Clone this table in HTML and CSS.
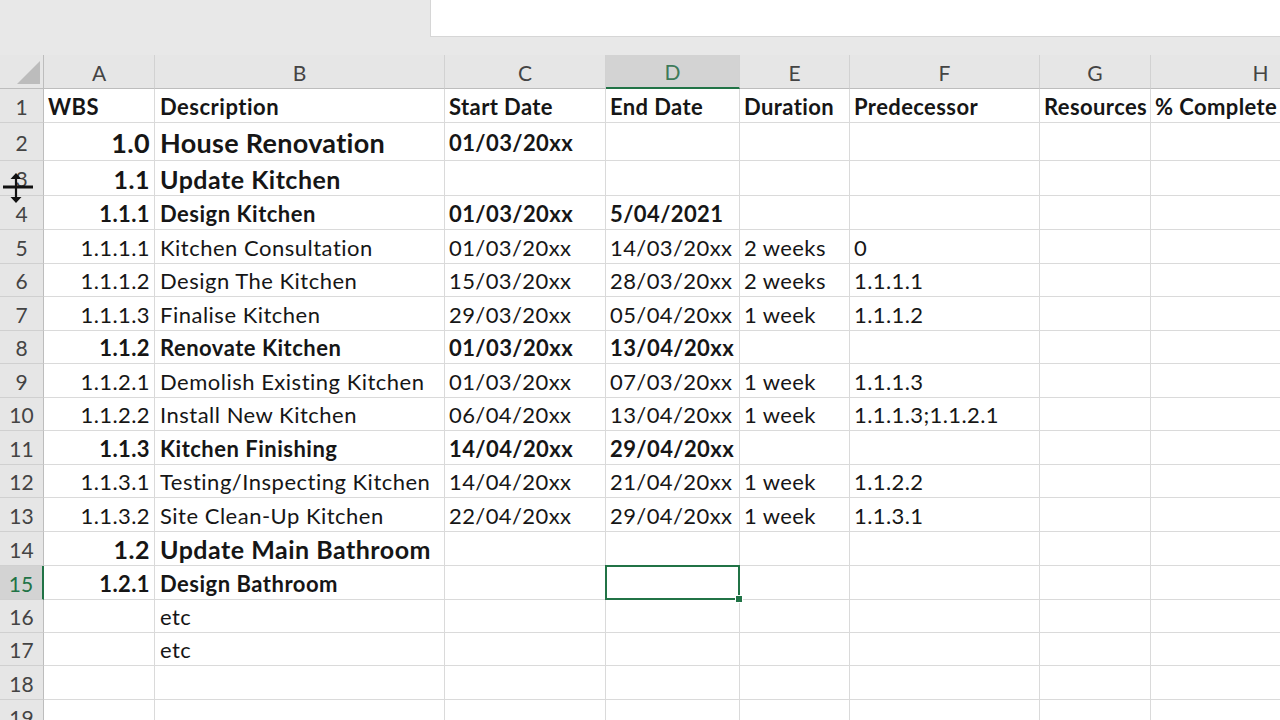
FILE: index.html
```html
<!DOCTYPE html>
<html>
<head>
<meta charset="utf-8">
<link rel="stylesheet" href="styles.css">
</head>
<body>
<div class="app">
  <div class="topbar"><div class="formula"></div></div>
  <div class="sheet">
    <div class="corner"><span class="tri"></span></div>
    <div class="ch">A</div><div class="ch">B</div><div class="ch">C</div><div class="ch sel">D</div><div class="ch">E</div><div class="ch">F</div><div class="ch">G</div><div class="ch">H</div>

    <div class="rh">1</div>
    <div class="c b">WBS</div><div class="c b desc">Description</div><div class="c b">Start Date</div><div class="c b">End Date</div><div class="c b">Duration</div><div class="c b">Predecessor</div><div class="c b">Resources</div><div class="c b">% Complete</div>

    <div class="rh">2</div>
    <div class="c r b xl">1.0</div><div class="c b xl desc">House Renovation</div><div class="c b">01/03/20xx</div><div class="c"></div><div class="c"></div><div class="c"></div><div class="c"></div><div class="c"></div>

    <div class="rh">3</div>
    <div class="c r b l">1.1</div><div class="c b l desc">Update Kitchen</div><div class="c"></div><div class="c"></div><div class="c"></div><div class="c"></div><div class="c"></div><div class="c"></div>

    <div class="rh">4</div>
    <div class="c r b">1.1.1</div><div class="c b desc">Design Kitchen</div><div class="c b">01/03/20xx</div><div class="c b">5/04/2021</div><div class="c"></div><div class="c"></div><div class="c"></div><div class="c"></div>

    <div class="rh">5</div>
    <div class="c r">1.1.1.1</div><div class="c desc">Kitchen Consultation</div><div class="c">01/03/20xx</div><div class="c">14/03/20xx</div><div class="c">2 weeks</div><div class="c">0</div><div class="c"></div><div class="c"></div>

    <div class="rh">6</div>
    <div class="c r">1.1.1.2</div><div class="c desc">Design The Kitchen</div><div class="c">15/03/20xx</div><div class="c">28/03/20xx</div><div class="c">2 weeks</div><div class="c">1.1.1.1</div><div class="c"></div><div class="c"></div>

    <div class="rh">7</div>
    <div class="c r">1.1.1.3</div><div class="c desc">Finalise Kitchen</div><div class="c">29/03/20xx</div><div class="c">05/04/20xx</div><div class="c">1 week</div><div class="c">1.1.1.2</div><div class="c"></div><div class="c"></div>

    <div class="rh">8</div>
    <div class="c r b">1.1.2</div><div class="c b desc">Renovate Kitchen</div><div class="c b">01/03/20xx</div><div class="c b">13/04/20xx</div><div class="c"></div><div class="c"></div><div class="c"></div><div class="c"></div>

    <div class="rh">9</div>
    <div class="c r">1.1.2.1</div><div class="c desc">Demolish Existing Kitchen</div><div class="c">01/03/20xx</div><div class="c">07/03/20xx</div><div class="c">1 week</div><div class="c">1.1.1.3</div><div class="c"></div><div class="c"></div>

    <div class="rh">10</div>
    <div class="c r">1.1.2.2</div><div class="c desc">Install New Kitchen</div><div class="c">06/04/20xx</div><div class="c">13/04/20xx</div><div class="c">1 week</div><div class="c">1.1.1.3;1.1.2.1</div><div class="c"></div><div class="c"></div>

    <div class="rh">11</div>
    <div class="c r b">1.1.3</div><div class="c b desc">Kitchen Finishing</div><div class="c b">14/04/20xx</div><div class="c b">29/04/20xx</div><div class="c"></div><div class="c"></div><div class="c"></div><div class="c"></div>

    <div class="rh">12</div>
    <div class="c r">1.1.3.1</div><div class="c desc">Testing/Inspecting Kitchen</div><div class="c">14/04/20xx</div><div class="c">21/04/20xx</div><div class="c">1 week</div><div class="c">1.1.2.2</div><div class="c"></div><div class="c"></div>

    <div class="rh">13</div>
    <div class="c r">1.1.3.2</div><div class="c desc">Site Clean-Up Kitchen</div><div class="c">22/04/20xx</div><div class="c">29/04/20xx</div><div class="c">1 week</div><div class="c">1.1.3.1</div><div class="c"></div><div class="c"></div>

    <div class="rh">14</div>
    <div class="c r b l">1.2</div><div class="c b l desc">Update Main Bathroom</div><div class="c"></div><div class="c"></div><div class="c"></div><div class="c"></div><div class="c"></div><div class="c"></div>

    <div class="rh sel">15</div>
    <div class="c r b">1.2.1</div><div class="c b desc">Design Bathroom</div><div class="c"></div><div class="c active"><span class="handle"></span></div><div class="c"></div><div class="c"></div><div class="c"></div><div class="c"></div>

    <div class="rh">16</div>
    <div class="c"></div><div class="c desc">etc</div><div class="c"></div><div class="c"></div><div class="c"></div><div class="c"></div><div class="c"></div><div class="c"></div>

    <div class="rh">17</div>
    <div class="c"></div><div class="c desc">etc</div><div class="c"></div><div class="c"></div><div class="c"></div><div class="c"></div><div class="c"></div><div class="c"></div>

    <div class="rh">18</div>
    <div class="c"></div><div class="c"></div><div class="c"></div><div class="c"></div><div class="c"></div><div class="c"></div><div class="c"></div><div class="c"></div>

    <div class="rh">19</div>
    <div class="c"></div><div class="c"></div><div class="c"></div><div class="c"></div><div class="c"></div><div class="c"></div><div class="c"></div><div class="c"></div>
  </div>
  <svg class="cursor" width="34" height="36" viewBox="0 0 34 36">
    <path d="M2 17 L32 17" stroke="#111" stroke-width="3"/>
    <path d="M15 5 L15 31" stroke="#111" stroke-width="2.2"/>
    <path d="M9.5 9 L15 3 L20.5 9 Z" fill="#111"/>
    <path d="M9.5 27 L15 33 L20.5 27 Z" fill="#111"/>
  </svg>
</div>
</body>
</html>
```
FILE: styles.css
```css
* { box-sizing: border-box; }
html, body { margin: 0; padding: 0; }
body {
  width: 1280px;
  height: 720px;
  overflow: hidden;
  background: #ffffff;
  font-family: "Lato", "Open Sans", sans-serif;
  color: #161616;
}
.app {
  position: relative;
  width: 1280px;
  height: 720px;
  overflow: hidden;
}
.topbar {
  height: 55px;
  background: #e8e8e8;
  display: flex;
  justify-content: flex-end;
}
.formula {
  width: 850px;
  height: 37px;
  background: #ffffff;
  border-left: 1px solid #d6d6d6;
  border-bottom: 1px solid #d6d6d6;
}
.sheet {
  display: grid;
  grid-template-columns: 44px 111px 290px 161px 134px 110px 190px 111px 220px;
  grid-template-rows: 34px 34px 38px 35px 34px 34px 33px 34px 33px 34px 33px 34px 33px 34px 34px 34px 33px 33px 34px 34px;
  width: 1280px;
}
.corner {
  background: #e6e6e6;
  border-right: 1px solid #bdbdbd;
  border-bottom: 1px solid #bdbdbd;
  position: relative;
}
.tri {
  position: absolute;
  left: 17px;
  top: 6px;
  width: 0;
  height: 0;
  border-left: 23px solid transparent;
  border-bottom: 23px solid #bcbcbc;
}
.ch {
  background: #e6e6e6;
  border-right: 1px solid #d2d2d2;
  border-bottom: 1px solid #bdbdbd;
  display: flex;
  align-items: center;
  justify-content: center;
  font-size: 21px;
  color: #444444;
  padding-top: 1px;
}
.ch.sel {
  background: #d3d3d3;
  color: #3d7a5a;
  border-bottom: 2px solid #217346;
}
.rh {
  background: #e6e6e6;
  border-right: 1px solid #bdbdbd;
  border-bottom: 1px solid #d0d0d0;
  display: flex;
  align-items: center;
  justify-content: center;
  font-size: 21px;
  color: #444444;
  padding-top: 1px;
}
.rh.sel {
  background: #d3d3d3;
  color: #217346;
  border-right: 2px solid #217346;
}
.c {
  border-right: 1px solid #dadada;
  border-bottom: 1px solid #dadada;
  display: flex;
  align-items: center;
  padding: 1px 4px 0 4px;
  font-size: 22px;
  white-space: nowrap;
  overflow: visible;
  letter-spacing: 0.4px;
}
.c.desc { padding-left: 5px; letter-spacing: 0.5px; }
.c.r { justify-content: flex-end; padding-right: 4px; }
.b { font-weight: 700; }
.c.xl { font-size: 27px; letter-spacing: 0.3px; }
.c.l { font-size: 25px; letter-spacing: 0.5px; }
.c.active {
  position: relative;
  border: 2px solid #217346;
  margin: -1px 0 0 -1px;
}
.handle {
  position: absolute;
  right: -5px;
  bottom: -5px;
  width: 8px;
  height: 8px;
  background: #217346;
  border: 1px solid #ffffff;
}
.cursor {
  position: absolute;
  left: 1px;
  top: 170px;
}
```
